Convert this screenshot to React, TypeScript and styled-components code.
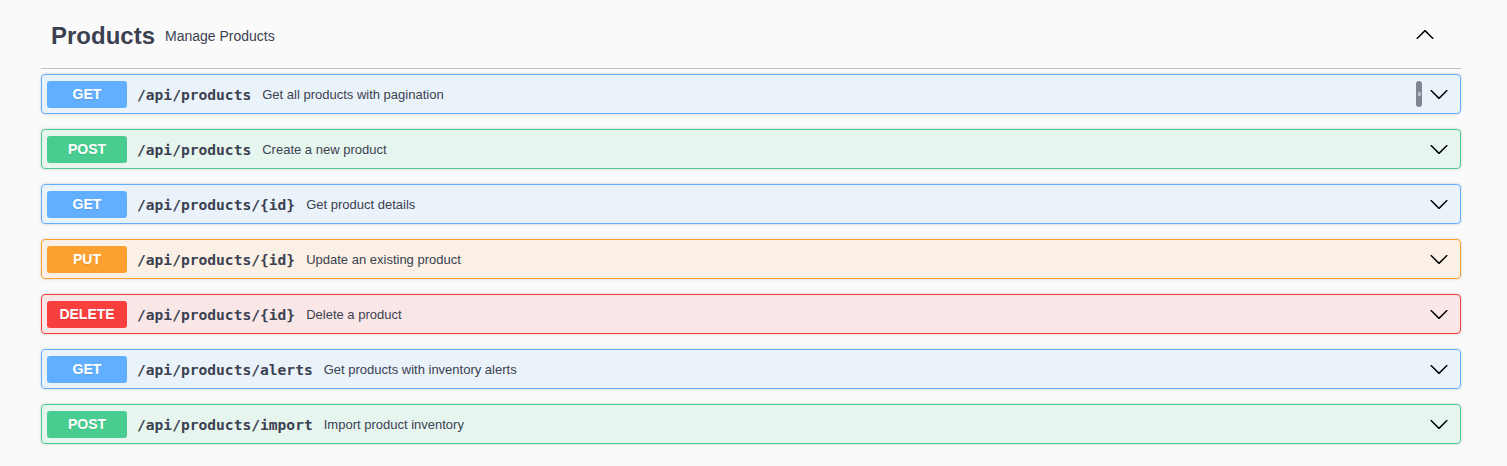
import React from 'react';
import styled, { createGlobalStyle } from 'styled-components';

const GlobalStyle = createGlobalStyle`
  html, body {
    margin: 0;
    padding: 0;
    background: #fafafa;
    font-family: 'Liberation Sans', Arial, sans-serif;
    color: #3b4151;
  }
`;

type Method = 'GET' | 'POST' | 'PUT' | 'DELETE';

const palette: Record<Method, { main: string; bg: string }> = {
  GET: { main: '#61affe', bg: 'rgba(97, 175, 254, 0.1)' },
  POST: { main: '#49cc90', bg: 'rgba(73, 204, 144, 0.1)' },
  PUT: { main: '#fca130', bg: 'rgba(252, 161, 48, 0.1)' },
  DELETE: { main: '#f93e3e', bg: 'rgba(249, 62, 62, 0.1)' },
};

const Page = styled.div`
  padding: 0 46px 0 41px;
  height: 466px;
  box-sizing: border-box;
`;

const TagHeader = styled.div`
  display: flex;
  align-items: center;
  height: 69px;
  box-sizing: border-box;
  padding: 3px 26px 0 10px;
  border-bottom: 1px solid rgba(59, 65, 81, 0.3);
  margin-bottom: 5px;
`;

const TagTitle = styled.h3`
  margin: 0;
  font-size: 24px;
  font-weight: 700;
  color: #3b4151;
`;

const TagNote = styled.small`
  margin-left: 10px;
  font-size: 14px;
  color: #3b4151;
  flex: 1;
`;

const ArrowButton = styled.span<{ $up?: boolean }>`
  display: flex;
  width: 20px;
  height: 20px;
  margin-top: ${(p) => (p.$up ? '-2px' : '0')};
`;

const OpList = styled.div`
  display: flex;
  flex-direction: column;
  gap: 15px;
`;

const OpBlock = styled.div<{ $method: Method }>`
  display: flex;
  align-items: center;
  height: 40px;
  box-sizing: border-box;
  padding: 0 11px 0 5px;
  border: 1px solid ${(p) => palette[p.$method].main};
  background: ${(p) => palette[p.$method].bg};
  border-radius: 4px;
  box-shadow: 0 0 3px rgba(0, 0, 0, 0.19);
`;

const MethodBadge = styled.span<{ $method: Method }>`
  display: flex;
  align-items: center;
  justify-content: center;
  width: 80px;
  height: 27px;
  border-radius: 3px;
  background: ${(p) => palette[p.$method].main};
  color: #fff;
  font-size: 14px;
  font-weight: 700;
  text-shadow: 0 1px 0 rgba(0, 0, 0, 0.1);
`;

const Path = styled.span`
  padding: 0 11px 0 10px;
  font-family: 'DejaVu Sans Mono', 'Liberation Mono', monospace;
  font-size: 14.6px;
  font-weight: 700;
  color: #3b4151;
`;

const Summary = styled.span`
  flex: 1;
  font-size: 13px;
  color: #3b4151;
`;

const CopyHandle = styled.span`
  display: flex;
  align-items: center;
  justify-content: center;
  width: 6px;
  height: 26px;
  margin-right: 7px;
  border-radius: 3px;
  background: #7f8593;

  &::after {
    content: '';
    width: 3px;
    height: 4px;
    background: #b9bdc6;
    border-radius: 1px;
  }
`;

const Chevron: React.FC<{ up?: boolean }> = ({ up }) => (
  <ArrowButton $up={up}>
    <svg width="20" height="20" viewBox="0 0 20 20" style={up ? { transform: 'rotate(180deg)' } : undefined}>
      <path
        fill="#000"
        d="M17.418 6.109c.272-.268.709-.268.979 0s.271.701 0 .969l-7.908 7.83c-.27.268-.707.268-.979 0l-7.908-7.83c-.27-.268-.27-.701 0-.969.271-.268.709-.268.979 0L10 13.25l7.418-7.141z"
      />
    </svg>
  </ArrowButton>
);

const operations: { method: Method; path: string; summary: string; handle?: boolean }[] = [
  { method: 'GET', path: '/api/products', summary: 'Get all products with pagination', handle: true },
  { method: 'POST', path: '/api/products', summary: 'Create a new product' },
  { method: 'GET', path: '/api/products/{id}', summary: 'Get product details' },
  { method: 'PUT', path: '/api/products/{id}', summary: 'Update an existing product' },
  { method: 'DELETE', path: '/api/products/{id}', summary: 'Delete a product' },
  { method: 'GET', path: '/api/products/alerts', summary: 'Get products with inventory alerts' },
  { method: 'POST', path: '/api/products/import', summary: 'Import product inventory' },
];

export default function App() {
  return (
    <Page>
      <GlobalStyle />
      <TagHeader>
        <TagTitle>Products</TagTitle>
        <TagNote>Manage Products</TagNote>
        <Chevron up />
      </TagHeader>
      <OpList>
        {operations.map((op, i) => (
          <OpBlock key={i} $method={op.method}>
            <MethodBadge $method={op.method}>{op.method}</MethodBadge>
            <Path>{op.path}</Path>
            <Summary>{op.summary}</Summary>
            {op.handle && <CopyHandle />}
            <Chevron />
          </OpBlock>
        ))}
      </OpList>
    </Page>
  );
}
